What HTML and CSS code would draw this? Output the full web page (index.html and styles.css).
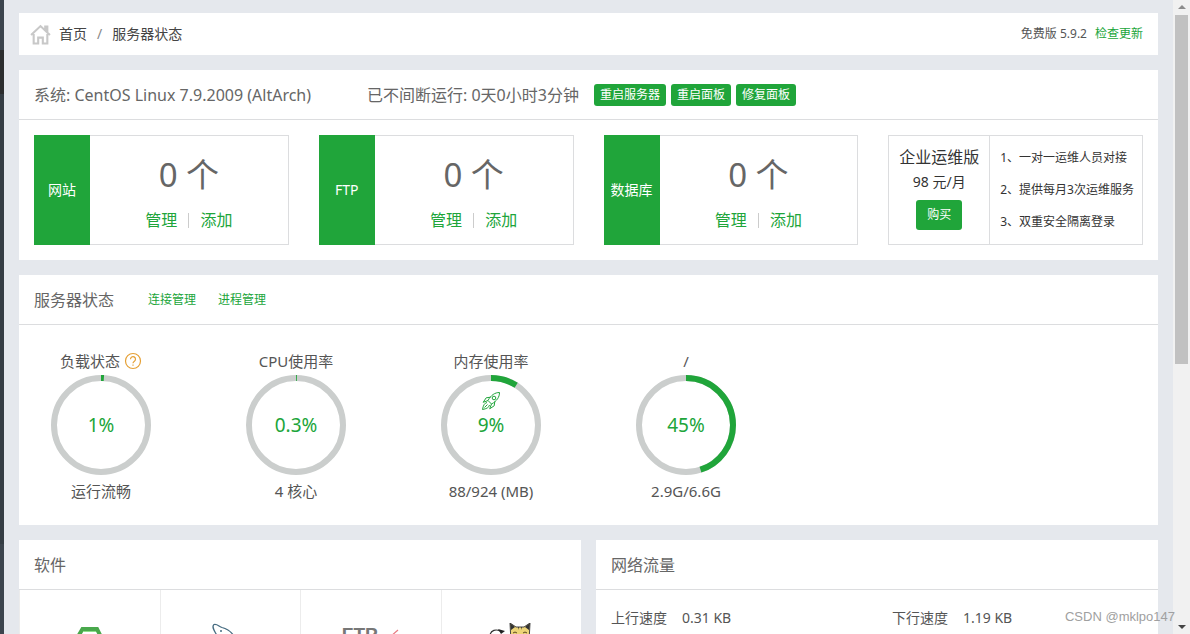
FILE: index.html
```html
<!DOCTYPE html>
<html lang="zh-CN">
<head>
<meta charset="utf-8">
<title>服务器状态</title>
<link rel="stylesheet" href="styles.css">
</head>
<body>
<div class="app">
  <nav class="rail" aria-label="菜单"><span class="rail-top"></span><span class="rail-active"></span><span class="rail-menu"></span><span class="rail-foot"></span></nav>
  <main class="main">
    <header class="card topbar">
      <svg class="home" viewBox="0 0 20 20" aria-hidden="true"><path d="M1 10.500 10 2l9 8.500M14.500 6V2.500h2V8M3.500 9.500v9h4.300v-5.500h4.400v5.500h4.300v-9"/></svg>
      <a class="crumb" href="#">首页</a><span class="slash">/</span><span class="crumb">服务器状态</span>
      <span class="version">免费版 5.9.2</span><a class="link" href="#">检查更新</a>
    </header>

    <section class="card">
      <div class="card-head">
        <span class="system">系统: CentOS Linux 7.9.2009 (AltArch)</span>
        <span class="uptime">已不间断运行: 0天0小时3分钟</span>
        <div class="actions">
          <button class="btn">重启服务器</button>
          <button class="btn">重启面板</button>
          <button class="btn">修复面板</button>
        </div>
      </div>
      <div class="boxes">
        <article class="box"><h2 class="box-name">网站</h2><div class="box-body"><div class="count">0 个</div><div class="box-links"><a href="#">管理</a><i class="sep"></i><a href="#">添加</a></div></div></article>
        <article class="box"><h2 class="box-name">FTP</h2><div class="box-body"><div class="count">0 个</div><div class="box-links"><a href="#">管理</a><i class="sep"></i><a href="#">添加</a></div></div></article>
        <article class="box"><h2 class="box-name">数据库</h2><div class="box-body"><div class="count">0 个</div><div class="box-links"><a href="#">管理</a><i class="sep"></i><a href="#">添加</a></div></div></article>
        <article class="box offer">
          <div class="offer-price"><h2 class="offer-name">企业运维版</h2><div class="price">98 元/月</div><button class="btn buy">购买</button></div>
          <div class="offer-list"><span>1、一对一运维人员对接</span><span>2、提供每月3次运维服务</span><span>3、双重安全隔离登录</span></div>
        </article>
      </div>
    </section>

    <section class="card status">
      <div class="card-head">
        <h2 class="title">服务器状态</h2>
        <a class="link head-link" href="#">连接管理</a><a class="link head-link" href="#">进程管理</a>
      </div>
      <div class="gauges">
        <div class="gauge">
          <div class="gauge-label">负载状态<svg class="help" viewBox="0 0 18 18" aria-label="帮助"><circle cx="9" cy="9" r="7.500"/><path d="M6.500 7.200a2.500 2.500 0 1 1 3.900 2C9.400 9.900 9 10.200 9 11.200M9 12.500v1.200"/></svg></div>
          <div class="dial"><svg class="ring" viewBox="0 0 100 100"><circle class="track" cx="50" cy="50" r="47"/><circle class="value" cx="50" cy="50" r="47" pathLength="100" stroke-dasharray="1 99"/></svg><span class="pct">1%</span></div>
          <div class="gauge-label">运行流畅</div>
        </div>
        <div class="gauge">
          <div class="gauge-label">CPU使用率</div>
          <div class="dial"><svg class="ring" viewBox="0 0 100 100"><circle class="track" cx="50" cy="50" r="47"/><circle class="value" cx="50" cy="50" r="47" pathLength="100" stroke-dasharray="0.3 99.7"/></svg><span class="pct">0.3%</span></div>
          <div class="gauge-label">4 核心</div>
        </div>
        <div class="gauge">
          <div class="gauge-label">内存使用率</div>
          <div class="dial"><svg class="ring" viewBox="0 0 100 100"><circle class="track" cx="50" cy="50" r="47"/><circle class="value" cx="50" cy="50" r="47" pathLength="100" stroke-dasharray="9 91"/></svg>
            <svg class="rocket" viewBox="0 0 20 20" aria-hidden="true"><path d="M18.500 1.500c-4.500 0-8.500 2.500-11.500 8l3.500 3.500c5.500-3 8-7 8-11.500zM9.500 6.200l-4.300.6-3 4.500 4.800-1.800M13.800 10.500l-.6 4.300-4.500 3 1.800-4.800M6 11.500c-2.500.5-3.800 3-4.500 7 4-.7 6.500-2 7-4.500M3.500 16.500l3-3"/><circle cx="13" cy="7" r="1.800"/></svg>
            <span class="pct">9%</span></div>
          <div class="gauge-label">88/924 (MB)</div>
        </div>
        <div class="gauge">
          <div class="gauge-label">/</div>
          <div class="dial"><svg class="ring" viewBox="0 0 100 100"><circle class="track" cx="50" cy="50" r="47"/><circle class="value" cx="50" cy="50" r="47" pathLength="100" stroke-dasharray="45 55"/></svg><span class="pct">45%</span></div>
          <div class="gauge-label">2.9G/6.6G</div>
        </div>
      </div>
    </section>

    <div class="columns">
      <section class="card">
        <div class="card-head"><h2 class="title">软件</h2></div>
        <div class="apps">
          <a class="app-cell" href="#" aria-label="Nginx"><svg class="app-icon" viewBox="0 0 48 48"><path d="M35 14 31 6H16.500L6 24l10.500 18H31l9-16H25" fill="none" stroke="#49a84c" stroke-width="4"/><path d="M17 8.500h13" stroke="#8be08a" stroke-width="1"/></svg></a>
          <a class="app-cell" href="#" aria-label="MySQL"><svg class="app-icon" viewBox="0 0 48 48"><path d="M12 14C9 9 5 4 8 1.500c3-1 5 2 8 3 6 1.500 10 5 13 10 4 7 5 13 12 18-5 0-4 2-8 5M12 14c1 6 0 8 2 15 1 3 3 4 4 0" fill="none" stroke="#456b80" stroke-width="1.200"/><circle cx="15" cy="8" r="1" fill="#456b80"/></svg></a>
          <a class="app-cell" href="#" aria-label="Pure-FTPd"><span class="ftp">FTP</span><svg class="feather" viewBox="0 0 16 40" aria-hidden="true"><path d="M14 1 6 8l5-1-8 8" fill="none" stroke="#e77b82" stroke-width="1.200"/></svg></a>
          <a class="app-cell" href="#" aria-label="Tomcat"><svg class="app-icon" viewBox="0 0 48 48"><path d="M3 12c1-5 6-6 10-4" fill="none" stroke="#333" stroke-width="1.200"/><path d="m11 6 7 2-4 3z" fill="#222"/><path d="m23 0 6 4h8l6-4-1 19H24z" fill="#edd477" stroke="#444" stroke-width="1"/><path d="M23 0l5 4-4 3zM43 0l-5 4 4 3zM31 4h1v3M34 4h1v3" fill="#333"/><path d="M26 10q2-2 4 0M36 10q2-2 4 0M31 13h4l-2 2z" fill="none" stroke="#5a4a20" stroke-width="1"/></svg></a>
        </div>
      </section>
      <section class="card">
        <div class="card-head"><h2 class="title">网络流量</h2></div>
        <div class="traffic">
          <div class="rate"><span>上行速度</span><span>0.31 KB</span></div>
          <div class="rate"><span>下行速度</span><span>1.19 KB</span></div>
        </div>
      </section>
    </div>
  </main>
  <div class="scroll" aria-hidden="true"><i class="arrow up"></i><i class="thumb"></i><i class="arrow down"></i></div>
  <span class="watermark">CSDN @mklpo147</span>
</div>
</body>
</html>
```
FILE: styles.css
```css
* { box-sizing: border-box; }
body { margin: 0; font: 14px/20px "Noto Sans", "Noto Sans CJK SC", sans-serif; color: #444; }
h2 { margin: 0; font-weight: 400; }
a { color: #20a53a; text-decoration: none; }
button { font-family: inherit; border: 0; }

.app { position: relative; display: flex; height: 100vh; overflow: hidden; background: #e5e8ed; }
.rail { flex: none; width: 4px; display: flex; flex-direction: column; background: #353d44; }
.rail-top { height: 50px; background: #3c444d; }
.rail-active { height: 44px; background: #2c2d2e; }
.rail-menu { height: 450px; }
.rail-foot { flex: 1; background: #3c444d; }

.main { flex: 1; min-width: 0; display: flex; flex-direction: column; gap: 15px; padding: 13px 15px 0; }
.card { flex: none; background: #fff; }
.card-head { display: flex; align-items: center; height: 50px; padding: 0 15px; border-bottom: 1px solid #dcdddf; font-size: 16px; color: #666; }
.title { font-size: 16px; }
.link { font-size: 12px; }

.topbar { display: flex; align-items: center; height: 42px; padding: 0 15px 0 11px; }
.home { width: 21px; height: 21px; margin-right: 8px; fill: none; stroke: #c8c8c8; stroke-width: 2; }
.crumb { color: #444; }
.slash { padding: 0 10px; color: #888; }
.version { margin: 0 8px 0 auto; font-size: 12px; color: #555; }

.system { min-width: 285px; }
.uptime { margin-left: 48px; }
.actions { display: flex; gap: 5px; margin-left: 15px; }
.btn { height: 22px; padding: 0 6px; border-radius: 3px; background: #20a53a; color: #fff; font-size: 12px; line-height: 22px; }

.boxes { display: grid; grid-template-columns: repeat(4, 1fr); gap: 30px; padding: 15px; }
.box { display: flex; height: 110px; border: 1px solid #dcdddf; }
.box-name { display: flex; flex: none; align-items: center; justify-content: center; width: 56px; margin: -1px 0 -1px -1px; background: #20a53a; color: #fff; font-size: 14px; }
.box-body { flex: 1; padding-top: 15px; text-align: center; }
.count { font-size: 33px; line-height: 48px; color: #666; }
.box-links { display: flex; align-items: center; justify-content: center; gap: 11px; padding-top: 9px; font-size: 16px; line-height: 24px; }
.sep { width: 1px; height: 15px; background: #ccc; }
.offer { color: #333; }
.offer-price { display: flex; flex: none; flex-direction: column; align-items: center; width: 101px; padding-top: 9px; border-right: 1px solid #dcdddf; }
.offer-name { font-size: 16px; line-height: 24px; white-space: nowrap; }
.price { line-height: 26px; }
.buy { height: 30px; margin-top: 5px; padding: 0 11px; }
.offer-list { padding: 6px 0 0 10px; font-size: 12px; line-height: 32px; white-space: nowrap; }
.offer-list span { display: block; }

.status { min-height: 250px; }
.head-link { margin-left: 22px; }
.title + .head-link { margin-left: 34px; }
.gauges { display: grid; grid-template-columns: repeat(4, 164px); gap: 31px; padding-top: 21px; }
.gauge { display: flex; flex-direction: column; align-items: center; }
.gauge-label { display: flex; align-items: center; gap: 4px; height: 29px; font-size: 15px; color: #555; }
.help { width: 18px; height: 18px; fill: none; stroke: #e5a035; stroke-width: 1.2; }
.dial { position: relative; display: grid; place-items: center; width: 100px; height: 100px; }
.ring { position: absolute; inset: 0; transform: rotate(-90deg); fill: none; stroke-width: 6; }
.track { stroke: #cbcecd; }
.value { stroke: #20a53a; }
.rocket { position: absolute; top: 16px; left: 40px; width: 20px; height: 20px; fill: none; stroke: #20a53a; stroke-width: 1; }
.pct { font-size: 19px; line-height: 24px; color: #20a53a; }
.dial + .gauge-label { height: 31px; }

.columns { display: grid; grid-template-columns: 1fr 1fr; gap: 15px; }
.apps { display: grid; grid-template-columns: repeat(4, 1fr); height: 140px; }
.app-cell { display: flex; justify-content: center; padding-top: 33px; border-left: 1px solid #ececec; }
.app-icon { width: 48px; height: 48px; }
.ftp { font: 700 19px/24px "Liberation Sans", sans-serif; color: #777; }
.feather { width: 16px; height: 40px; margin: 6px 0 0 6px; }
.traffic { display: grid; grid-template-columns: 1fr 1fr; column-gap: 15px; padding: 18px 0 0 15px; color: #555; }
.rate { display: flex; gap: 15px; }

.scroll { display: flex; flex: none; flex-direction: column; align-items: center; width: 17px; padding: 5px 0; background: #f1f1f1; }
.arrow { border: 4px solid transparent; }
.up { border-top: 0; border-bottom-color: #8c8c8c; }
.down { border-bottom: 0; border-top-color: #444; margin-top: auto; }
.thumb { width: 13px; height: 56%; margin-top: 6px; background: #c1c1c1; }
.watermark { position: absolute; right: 15px; bottom: 7px; font: 13px/20px "Liberation Sans", sans-serif; color: #a0a0a0; }
```
